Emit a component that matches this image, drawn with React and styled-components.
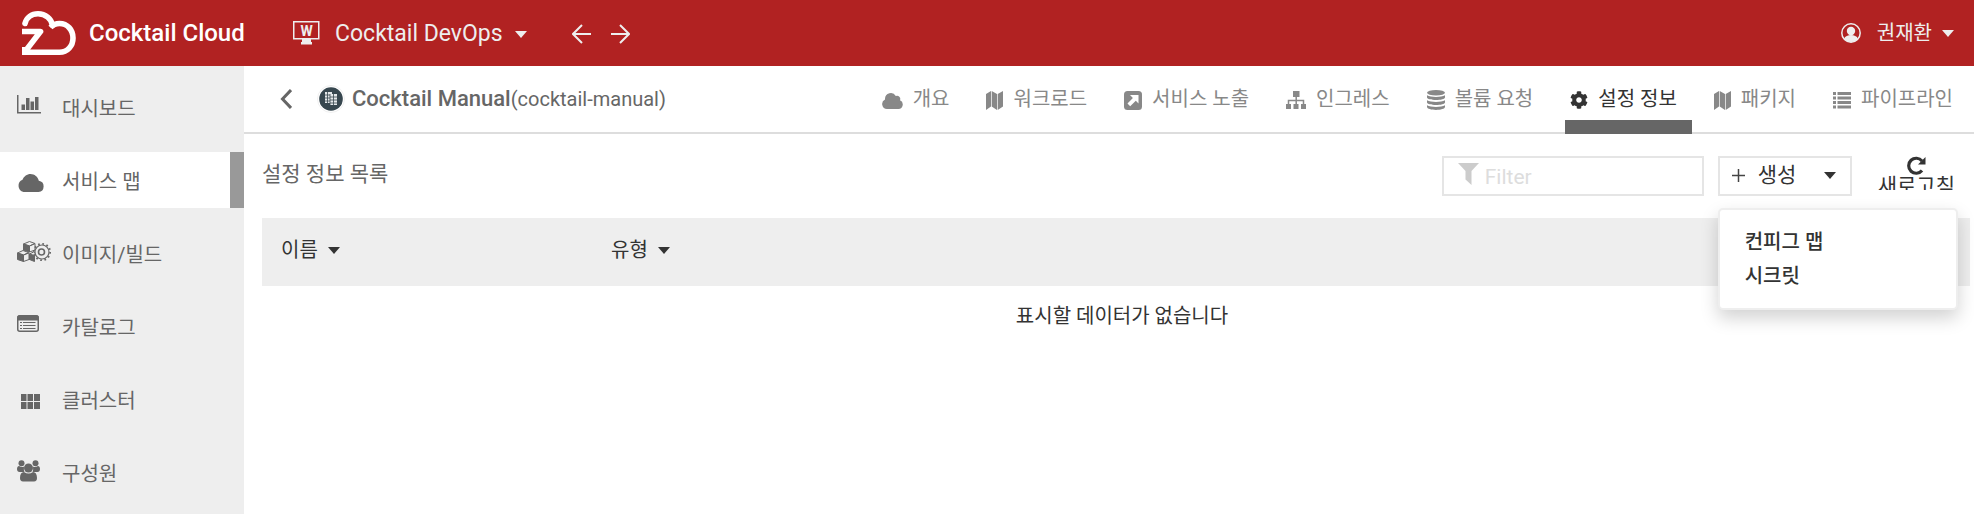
import React from 'react';
import styled, { createGlobalStyle } from 'styled-components';
import { FaCog } from 'react-icons/fa';

const Global = createGlobalStyle`
  *, *::before, *::after { box-sizing: border-box; }
  html { height: 100%; }
  body {
    margin: 0;
    min-height: 100%;
    background: #fff;
    color: #333;
    font-family: Roboto, "Noto Sans CJK KR", sans-serif;
    font-size: 20px;
    line-height: 28px;
  }
  button, input { font: inherit; color: inherit; }
  button { border: 0; background: none; padding: 0; cursor: pointer; }
  a { color: inherit; text-decoration: none; }
  svg { display: block; flex: none; }
`;

const Page = styled.div`
  display: flex;
  flex-direction: column;
  min-height: 100vh;
`;

const TopBar = styled.header`
  display: flex;
  align-items: center;
  height: 66px;
  padding: 0 20px 0 22px;
  background: #b12222;
  color: #eee;
`;

const Brand = styled.a`
  display: flex;
  align-items: center;
  gap: 13px;
  width: 271px;
  color: #fff;
  font-size: 24px;
  font-weight: 500;
`;

const Workspace = styled.button`
  display: flex;
  align-items: center;
  gap: 15px;
  font-size: 23px;
`;

const WorkspaceName = styled.span`
  display: flex;
  align-items: center;
  gap: 12px;
  padding-top: 2px;
`;

const History = styled.div`
  display: flex;
  gap: 20px;
  margin-left: 45px;
  padding-top: 2px;
`;

const UserMenu = styled.button`
  display: flex;
  align-items: center;
  gap: 10px;
  margin-left: auto;
`;

const UserName = styled.span`
  margin-left: 6px;
`;

const Caret = styled.span`
  border: solid transparent;
  border-width: 7px 6px 0;
  border-top-color: currentColor;
`;

const Body = styled.div`
  display: flex;
  flex: 1;
`;

const Sidebar = styled.nav`
  display: flex;
  flex-direction: column;
  gap: 17px;
  flex: 0 0 244px;
  padding-top: 13px;
  background: #eee;
  color: #666;
`;

const SideLink = styled.a`
  display: flex;
  align-items: center;
  height: 56px;
  padding-left: 17px;
  background: ${(p) => (p.$active ? '#fff' : 'none')};
  border-right: 14px solid ${(p) => (p.$active ? '#999' : 'transparent')};
`;

const SideIcon = styled.span`
  width: 45px;
`;

const SideLabel = styled.span`
  padding-top: 4px;
`;

const Main = styled.main`
  flex: 1;
  min-width: 0;
`;

const AppHeader = styled.div`
  display: flex;
  height: 68px;
  padding: 0 6px 0 36px;
  border-bottom: 2px solid #ddd;
`;

const AppTitle = styled.h1`
  display: flex;
  align-items: center;
  margin: 0;
  font-size: 20px;
  font-weight: 400;
  color: #666;
`;

const AppName = styled.b`
  font-size: 22px;
  font-weight: 500;
`;

const BackButton = styled.button`
  margin-right: 25px;
`;

const AppIcon = styled.span`
  margin-right: 7px;
`;

const Tabs = styled.nav`
  display: flex;
  gap: 17px;
  margin-left: auto;
`;

const Tab = styled.a`
  display: flex;
  align-items: center;
  gap: 10px;
  height: 68px;
  padding: 12px 15px 0 5px;
  color: ${(p) => (p.$active ? '#333' : '#888')};
  border-bottom: 14px solid ${(p) => (p.$active ? '#666' : 'transparent')};

  svg { margin-top: 2px; }
`;

const Toolbar = styled.div`
  display: flex;
  align-items: flex-start;
  padding: 22px 19px 22px 18px;
  font-size: 21px;
`;

const SectionTitle = styled.h2`
  margin: 4px auto 0 0;
  font-size: 21px;
  font-weight: 400;
  color: #666;
`;

const FilterBox = styled.label`
  display: flex;
  gap: 6px;
  width: 262px;
  height: 40px;
  padding: 5px 14px;
  border: 2px solid #e5e5e5;
  color: #ccc;
`;

const FilterInput = styled.input`
  flex: 1;
  min-width: 0;
  padding: 2px 0 0;
  border: 0;
  outline: 0;
  background: none;
  color: #333;

  &::placeholder { color: #ddd; opacity: 1; }
`;

const CreateMenu = styled.div`
  position: relative;
  margin: 0 26px 0 14px;
`;

const CreateButton = styled.button`
  display: flex;
  align-items: center;
  gap: 13px;
  width: 134px;
  height: 40px;
  padding: 0 14px 2px 12px;
  border: 2px solid #e5e5e5;

  ${Caret} { margin-left: auto; }
`;

const Menu = styled.div`
  position: absolute;
  z-index: 1;
  top: 52px;
  left: 0;
  display: flex;
  flex-direction: column;
  align-items: flex-start;
  gap: 6px;
  width: 240px;
  height: 102px;
  padding: 18px 25px;
  background: #fff;
  border: 2px solid #eee;
  border-radius: 5px;
  box-shadow: 0 8px 18px rgba(0, 0, 0, 0.18);
  font-size: 20px;
  font-weight: 500;
`;

const RefreshButton = styled.button`
  display: flex;
  flex-direction: column;
  align-items: center;
  height: 34px;
  overflow: hidden;
  line-height: 22px;
`;

const Table = styled.table`
  width: calc(100% - 22px);
  margin-left: 18px;
  border-collapse: collapse;
  table-layout: fixed;
`;

const HeadCell = styled.th`
  width: ${(p) => p.$width};
  height: 68px;
  padding: 0 19px 4px;
  background: #eee;
  text-align: left;
  font-weight: 400;
`;

const SortButton = styled.button`
  display: flex;
  align-items: center;
  gap: 10px;
  font-weight: 400;
`;

const EmptyCell = styled.td`
  height: 62px;
  padding: 0 0 2px 12px;
  text-align: center;
`;

const Logo = () => (
  <svg width="54" height="44" viewBox="0 0 54 44" fill="none" stroke="#fff" strokeWidth="5.600">
    <path d="M3 12.500C4.500 6.500 9.500 2.800 16 2.800c7.500 0 13.500 5 14.500 11.500" strokeLinecap="round" />
    <path d="M28.500 16.500c2.500-2.800 5.500-4 9-4C45.500 12.500 51 19 51 27s-5.500 14.200-13.500 14.200H2.500L18.500 20.500H0" strokeLinejoin="round" />
    <path d="M0 36h5v8H0z" fill="#fff" stroke="none" />
  </svg>
);

const WorkspaceIcon = () => (
  <svg width="27" height="24" viewBox="0 0 27 24" fill="none" stroke="currentColor">
    <path d="M.75 .75h25v17h-25z" strokeWidth="1.500" />
    <path d="M9 18h9v3h1v2.500H8V21h1z" fill="currentColor" stroke="none" />
    <text x="13.500" y="14.500" textAnchor="middle" fontSize="14" fontWeight="700" fill="currentColor" stroke="none">W</text>
  </svg>
);

const Arrow = ({ right }) => (
  <svg width="19" height="20" viewBox="0 0 19 20" fill="none" stroke="currentColor" strokeWidth="2">
    <path d={right ? 'M0 10h17M9 1l9 9-9 9' : 'M19 10H2M10 1l-9 9 9 9'} />
  </svg>
);

const UserIcon = () => (
  <svg width="20" height="20" viewBox="0 0 20 20" fill="currentColor">
    <circle cx="10" cy="10" r="9.200" fill="none" stroke="currentColor" strokeWidth="1.500" />
    <circle cx="10" cy="8" r="4.200" />
    <path d="M3 16c1-3 4-4 7-4s6 1 7 4c-4 4-10 4-14 0z" />
  </svg>
);

const ChevronLeft = () => (
  <svg width="12" height="20" viewBox="0 0 12 20" fill="none" stroke="#666" strokeWidth="3">
    <path d="M11 1l-8.500 9L11 19" />
  </svg>
);

const ServerIcon = () => (
  <svg width="28" height="30" viewBox="0 0 28 30">
    <circle cx="14" cy="15" r="13.500" fill="#fff" stroke="#f0f0f0" />
    <circle cx="14" cy="15" r="11.800" fill="#37474f" />
    <path d="M8 8h7v11H8zM13 10h7v11h-7z" fill="#e4e8ea" />
    <path d="M8 11h5M8 14h5M8 17h5M13 13h7M13 16h7M13 19h7M13 10v11M10.500 8v11M16.500 10v11" stroke="#37474f" strokeWidth=".8" />
  </svg>
);

const ChartIcon = () => (
  <svg width="24" height="24" viewBox="0 0 24 24" fill="currentColor">
    <path d="M0 0h1.500v17H24v1.500H0zM4.500 9.500H8V15H4.500zM9 3h3.500v12H9zM13.500 6.500H17V15h-3.500zM18 2h3.500v13H18z" />
  </svg>
);

const CloudIcon = () => (
  <svg width="27" height="24" viewBox="0 -6 27 24" fill="currentColor">
    <path d="M6.500 18A6.500 6.500 0 0 1 5.500 5.700C7 2.300 10 0 13.500 0c4 0 7.400 2.800 8.300 6.700A5.700 5.700 0 0 1 21.500 18z" />
  </svg>
);

const BuildIcon = () => (
  <svg width="34" height="24" viewBox="0 0 34 24" fill="none" stroke="currentColor">
    <path d="M6.500 3l6-2.500 5.500 2-5.500 2.500zM12.500 5v6l5.500-2V2.500zM.5 12L6 9.500l5.500 2L6.500 14zM6.500 14v6.500l5.500-2V12zM12.500 13l4-2 3 2M12.500 13v6" />
    <path d="M6.500 3l6 2v6l-6-2zM.5 12l6 2v6.500l-6-2zM12.500 13l5 1.500v6l-5-2z" fill="currentColor" />
    <circle cx="25" cy="11" r="7" fill="#eee" strokeWidth="1.200" />
    <circle cx="25" cy="11" r="8.200" strokeWidth="1.800" strokeDasharray="1.700 2.600" />
    <circle cx="24.500" cy="11" r="3" strokeWidth="1.600" />
  </svg>
);

const CatalogIcon = () => (
  <svg width="22" height="24" viewBox="0 -1 22 24" fill="none" stroke="currentColor">
    <rect x=".75" y=".75" width="20.500" height="15.500" rx="2" strokeWidth="1.500" />
    <path d="M1 1h20v4H1z" fill="currentColor" />
    <path d="M3 7.500h2M3 10.500h2M3 13.500h2M6 7.500h12.500M6 10.500h12.500M6 13.500h12.500" />
  </svg>
);

const GridIcon = () => (
  <svg width="24" height="24" viewBox="0 -7 24 24" fill="currentColor">
    <path d="M4 0h5.500v7H4zM10.500 0h5.500v7h-5.500zM17 0h6v7h-6zM4 8h5.500v7H4zM10.500 8h5.500v7h-5.500zM17 8h6v7h-6z" />
  </svg>
);

const MembersIcon = () => (
  <svg width="23" height="24" viewBox="0 0 23 24" fill="currentColor">
    <circle cx="4.500" cy="3.300" r="3" />
    <circle cx="18.500" cy="3.300" r="3" />
    <path d="M0 9c0-2 1-3 2-3 2 1.300 4 1.300 5 .5 0 2-.5 4 .5 5.500H2.500C1 12 0 11 0 9zM23 9c0-2-1-3-2-3-2 1.300-4 1.300-5 .5 0 2 .5 4-.5 5.500h5c1.500 0 2.500-1 2.500-3z" />
    <circle cx="11.500" cy="8" r="4.500" />
    <path d="M3 18c0-4 1.500-6 4-6 3 2 6 2 9 0 2.500 0 4 2 4 6 0 2-1 3.500-3 3.500H6c-2 0-3-1.500-3-3.500z" />
  </svg>
);

const OverviewIcon = () => (
  <svg width="21" height="17" viewBox="0 0 21 17" fill="currentColor">
    <path d="M5 17a5 5 0 0 1-2-9.500V6.800A5.800 5.800 0 0 1 13.800 4 3.200 3.200 0 0 1 18 8.200 4.600 4.600 0 0 1 16.500 17z" />
  </svg>
);

const MapIcon = () => (
  <svg width="17" height="19" viewBox="0 0 17 19" fill="currentColor">
    <path d="M0 3l5-3v15.500L0 19zM5.700 0l5.300 3v16l-5.300-3.500zM11.700 3L17 0v15.500L11.700 19z" />
  </svg>
);

const ExternalIcon = () => (
  <svg width="18" height="19" viewBox="0 0 18 19">
    <rect width="18" height="19" rx="3.500" fill="currentColor" />
    <path d="M6 4h8.500v8.500l-2.700-2.700-5.600 5.400-2.700-2.700 5.400-5.600z" fill="#fff" />
  </svg>
);

const SitemapIcon = () => (
  <svg width="20" height="18" viewBox="0 0 20 18" fill="currentColor">
    <path d="M7 0h6.500v6H7zM0 13h5v5H0zM7.500 13h5v5h-5zM15 13h5v5h-5z" />
    <path d="M10.200 5v8M2.500 13V9.500h15V13" fill="none" stroke="currentColor" strokeWidth="1.500" />
  </svg>
);

const VolumeIcon = () => (
  <svg width="18" height="20" viewBox="0 0 18 20" fill="currentColor">
    <ellipse cx="9" cy="2.800" rx="9" ry="2.800" />
    <path d="M0 5.300c4 2.300 14 2.300 18 0v2C18 11 0 11 0 7.300zM0 10.300c4 2.300 14 2.300 18 0v2C18 16 0 16 0 12.300zM0 15.300c4 2.300 14 2.300 18 0v1.500c0 4.200-18 4.200-18 0z" />
  </svg>
);

const PipelineIcon = () => (
  <svg width="18" height="17" viewBox="0 0 18 17" fill="currentColor">
    <path d="M0 0h3v3H0zM4.500 0H18v3H4.500zM0 4.500h3v3H0zM4.500 4.500H18v3H4.500zM0 9h3v3H0zM4.500 9H18v3H4.500zM0 13.500h3v3H0zM4.500 13.500H18v3H4.500z" />
  </svg>
);

const SettingsIcon = () => <FaCog size={18} />;

const FunnelIcon = () => (
  <svg width="21" height="22" viewBox="0 0 21 22" fill="currentColor">
    <path d="M0 0h21l-7.500 8v14L7.500 16.500V8z" />
  </svg>
);

const PlusIcon = () => (
  <svg width="13" height="13" viewBox="0 0 13 13" stroke="#444">
    <path d="M0 6.500h13M6.500 0v13" strokeWidth="1.500" />
  </svg>
);

const RefreshIcon = () => (
  <svg width="20" height="19" viewBox="0 0 20 19" fill="none">
    <path d="M16 5A7.500 7.500 0 1 0 16 14.500" stroke="currentColor" strokeWidth="3.200" />
    <path d="M19.500 1v7.500H12z" fill="currentColor" />
  </svg>
);

const sideItems = [
  ['대시보드', ChartIcon],
  ['서비스 맵', CloudIcon],
  ['이미지/빌드', BuildIcon],
  ['카탈로그', CatalogIcon],
  ['클러스터', GridIcon],
  ['구성원', MembersIcon],
];

const tabs = [
  ['개요', OverviewIcon],
  ['워크로드', MapIcon],
  ['서비스 노출', ExternalIcon],
  ['인그레스', SitemapIcon],
  ['볼륨 요청', VolumeIcon],
  ['설정 정보', SettingsIcon],
  ['패키지', MapIcon],
  ['파이프라인', PipelineIcon],
];

export default function App() {
  return (
    <Page>
      <Global />
      <TopBar>
        <Brand href="#"><Logo />Cocktail Cloud</Brand>
        <Workspace type="button">
          <WorkspaceIcon />
          <WorkspaceName>Cocktail DevOps<Caret /></WorkspaceName>
        </Workspace>
        <History>
          <button type="button" aria-label="뒤로"><Arrow /></button>
          <button type="button" aria-label="앞으로"><Arrow right /></button>
        </History>
        <UserMenu type="button"><UserIcon /><UserName>권재환</UserName><Caret /></UserMenu>
      </TopBar>
      <Body>
        <Sidebar>
          {sideItems.map(([label, Icon]) => (
            <SideLink key={label} href="#" $active={label === '서비스 맵'}>
              <SideIcon><Icon /></SideIcon>
              <SideLabel>{label}</SideLabel>
            </SideLink>
          ))}
        </Sidebar>
        <Main>
          <AppHeader>
            <AppTitle>
              <BackButton type="button" aria-label="이전"><ChevronLeft /></BackButton>
              <AppIcon><ServerIcon /></AppIcon>
              <AppName>Cocktail Manual</AppName>(cocktail-manual)
            </AppTitle>
            <Tabs>
              {tabs.map(([label, Icon]) => (
                <Tab key={label} href="#" $active={label === '설정 정보'}>
                  <Icon />{label}
                </Tab>
              ))}
            </Tabs>
          </AppHeader>
          <Toolbar>
            <SectionTitle>설정 정보 목록</SectionTitle>
            <FilterBox>
              <FunnelIcon />
              <FilterInput type="text" placeholder="Filter" aria-label="Filter" />
            </FilterBox>
            <CreateMenu>
              <CreateButton type="button" aria-expanded="true"><PlusIcon />생성<Caret /></CreateButton>
              <Menu>
                <button type="button">컨피그 맵</button>
                <button type="button">시크릿</button>
              </Menu>
            </CreateMenu>
            <RefreshButton type="button"><RefreshIcon />새로고침</RefreshButton>
          </Toolbar>
          <Table>
            <thead>
              <tr>
                <HeadCell $width="330px"><SortButton type="button">이름<Caret /></SortButton></HeadCell>
                <HeadCell><SortButton type="button">유형<Caret /></SortButton></HeadCell>
              </tr>
            </thead>
            <tbody>
              <tr><EmptyCell colSpan={2}>표시할 데이터가 없습니다</EmptyCell></tr>
            </tbody>
          </Table>
        </Main>
      </Body>
    </Page>
  );
}
